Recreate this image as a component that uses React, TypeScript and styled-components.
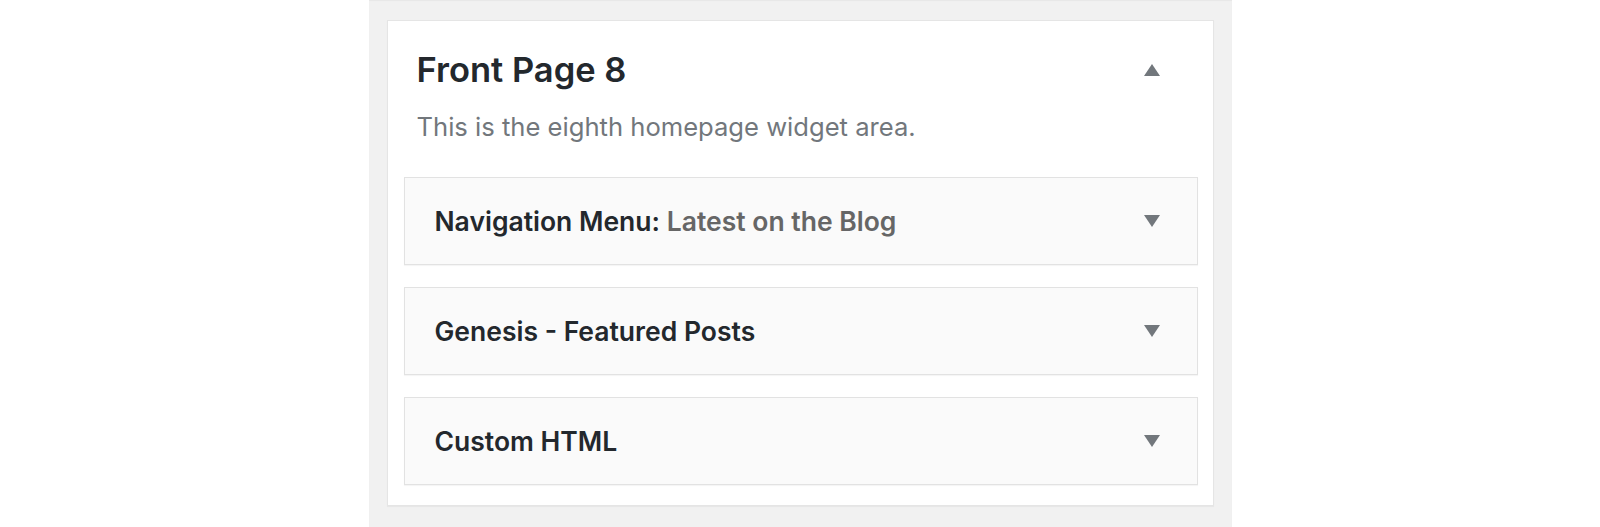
import React from 'react';
import styled, { createGlobalStyle } from 'styled-components';

const GlobalStyle = createGlobalStyle`
  html, body {
    margin: 0;
    padding: 0;
    background: #fff;
  }
  body {
    font-family: Inter, "Noto Sans", "Liberation Sans", sans-serif;
    -webkit-font-smoothing: antialiased;
  }
`;

const Column = styled.div`
  width: 863px;
  min-height: 100vh;
  margin: 0 auto;
  box-sizing: border-box;
  padding: 20px 18px 0;
  background: #f1f1f1;
  box-shadow: inset 0 1px 1px rgba(0, 0, 0, 0.04);
`;

const Card = styled.section`
  background: #fff;
  border: 1px solid #e5e5e5;
  box-shadow: 0 1px 1px rgba(0, 0, 0, 0.04);
  padding-bottom: 20px;
`;

const Header = styled.div`
  display: flex;
  align-items: center;
  justify-content: space-between;
  padding: 29px 53px 0 29px;
`;

const Title = styled.h3`
  margin: 0;
  font-size: 34.5px;
  line-height: 40px;
  font-weight: 600;
  color: #23282d;
`;

const Description = styled.p`
  margin: 21px 0 0;
  padding: 0 29px;
  font-size: 25.6px;
  line-height: 32px;
  color: #72777c;
`;

const WidgetList = styled.div`
  display: flex;
  flex-direction: column;
  gap: 22px;
  margin-top: 34px;
  padding: 0 15px 0 16px;
`;

const Widget = styled.div`
  display: flex;
  align-items: center;
  justify-content: space-between;
  height: 88px;
  box-sizing: border-box;
  padding: 0 37px 0 30px;
  background: #fafafa;
  border: 1px solid #e2e2e2;
  box-shadow: 0 1px 1px rgba(0, 0, 0, 0.04);
`;

const WidgetTitle = styled.span`
  font-size: 26.5px;
  font-weight: 600;
  color: #23282d;
`;

const WidgetSubtitle = styled.span`
  color: #666;
`;

type ArrowProps = { direction: 'up' | 'down' };

const Arrow = ({ direction }: ArrowProps) => (
  <svg width="16" height="12" viewBox="0 0 16 12" aria-hidden="true">
    <polygon
      points={direction === 'up' ? '8,0 16,12 0,12' : '0,0 16,0 8,12'}
      fill="#72777c"
    />
  </svg>
);

const widgets = [
  { title: 'Navigation Menu', subtitle: 'Latest on the Blog' },
  { title: 'Genesis - Featured Posts' },
  { title: 'Custom HTML' },
];

const App = (): JSX.Element => (
  <>
    <GlobalStyle />
    <Column>
      <Card>
        <Header>
          <Title>Front Page 8</Title>
          <Arrow direction="up" />
        </Header>
        <Description>This is the eighth homepage widget area.</Description>
        <WidgetList>
          {widgets.map(w => (
            <Widget key={w.title}>
              <WidgetTitle>
                {w.title}
                {w.subtitle && <>:<WidgetSubtitle> {w.subtitle}</WidgetSubtitle></>}
              </WidgetTitle>
              <Arrow direction="down" />
            </Widget>
          ))}
        </WidgetList>
      </Card>
    </Column>
  </>
);

export default App;
